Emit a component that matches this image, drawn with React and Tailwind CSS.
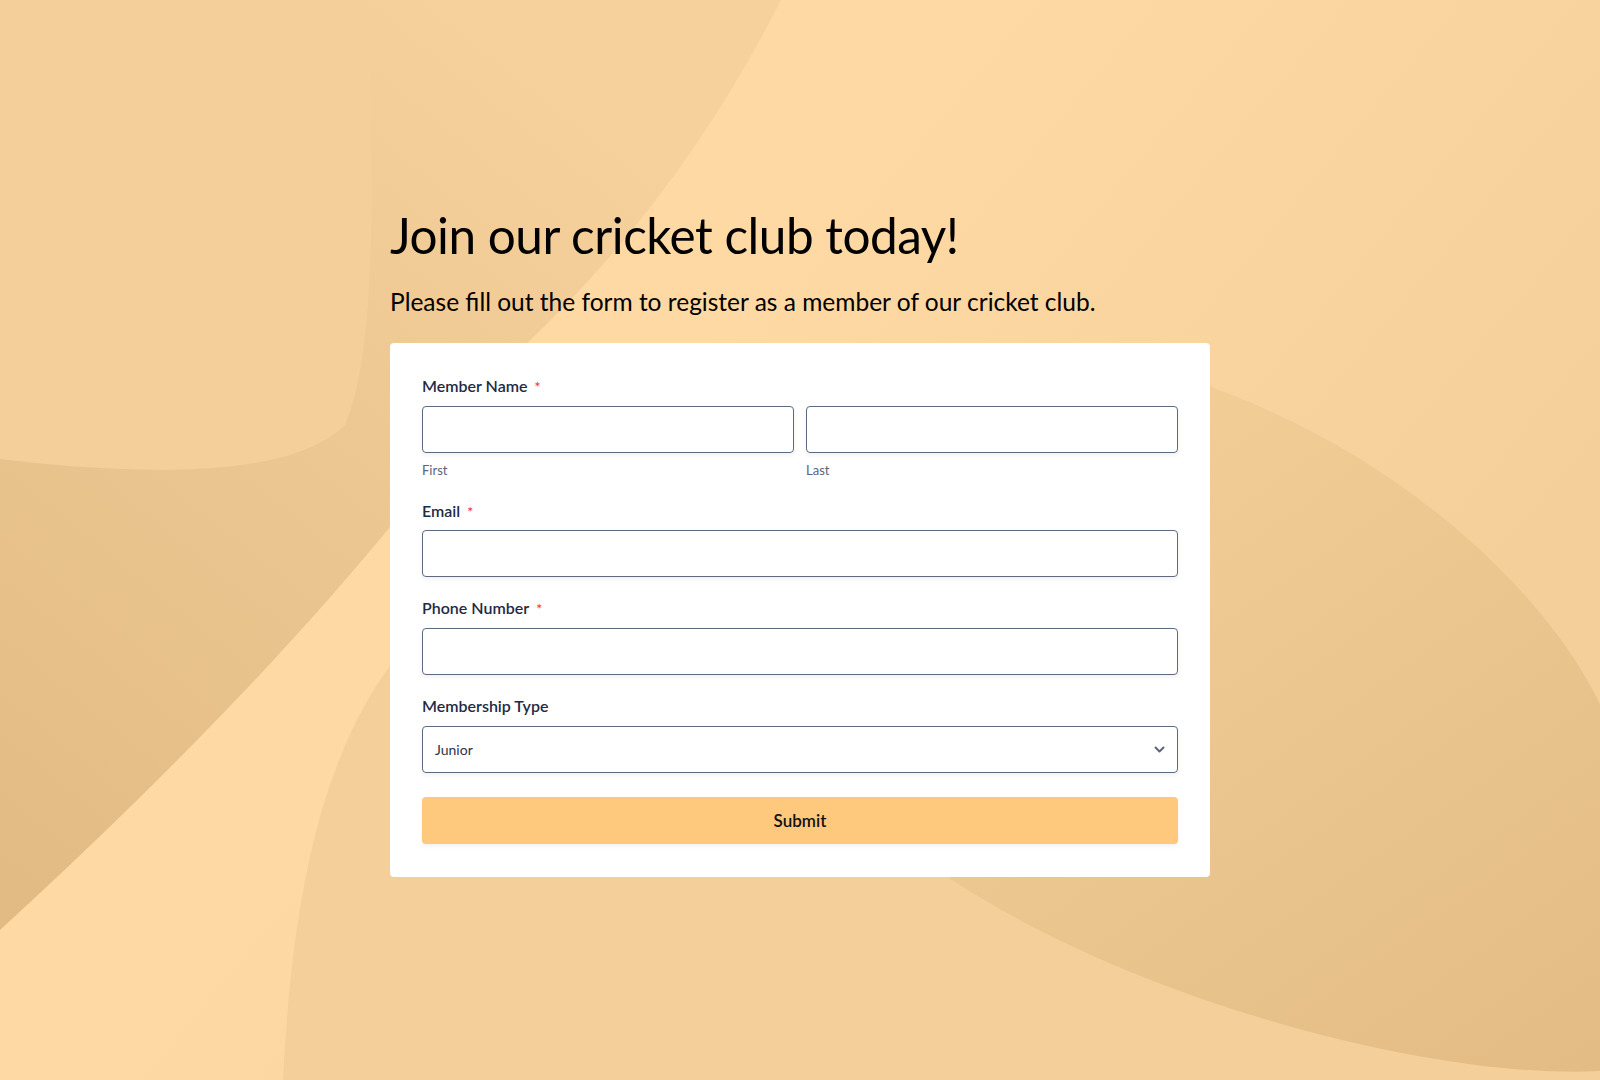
import React from 'react';

function Backdrop(){
  return (
    <svg className="absolute inset-0 w-full h-full" viewBox="0 0 1600 1080" preserveAspectRatio="none">
      <defs>
        <linearGradient id="bg" gradientUnits="userSpaceOnUse" x1="1000" y1="0" x2="1600" y2="500">
          <stop offset="0" stopColor="#fed9a3" />
          <stop offset="1" stopColor="#f5cf99" />
        </linearGradient>
        <linearGradient id="ga" gradientUnits="userSpaceOnUse" x1="650" y1="150" x2="40" y2="900">
          <stop offset="0" stopColor="#f6d19c" />
          <stop offset="1" stopColor="#e2bb84" />
        </linearGradient>
        <linearGradient id="gd" gradientUnits="userSpaceOnUse" x1="1150" y1="420" x2="1600" y2="1060">
          <stop offset="0" stopColor="#f2cd96" />
          <stop offset="1" stopColor="#e3bc85" />
        </linearGradient>
      </defs>
      <rect x="0" y="0" width="1600" height="1080" fill="url(#bg)" />
      <path d="M0 0 L781 0 Q680 200 520 350 Q360 600 0 930 Z" fill="url(#ga)" />
      <path d="M0 0 L367 0 C376 200 374 360 345 425 C300 470 190 472 122 469 C70 467 25 462 0 459 Z" fill="#f4cf9a" />
      <path d="M283 1080 C292 900 320 760 392 663 L560 360 L1205 360 L1205 380 L1600 720 L1600 1080 Z" fill="#f4cf9a" />
      <path d="M1184 378 C1380 440 1540 580 1600 704 L1600 1071 C1450 1080 1150 1010 949 878 L980 860 Z" fill="url(#gd)" />
    </svg>
  );
}

function Label({ text, required }){
  return (
    <label className="block text-[16px] leading-5 font-semibold text-[#1f2a44]">
      {text}
      {required && <span className="ml-[7px] text-[14px] text-[#f23a3c]">*</span>}
    </label>
  );
}

function Field({ label, required, gap = 'mt-[10px]', children }){
  return (
    <div>
      <Label text={label} required={required} />
      <div className={gap}>{children}</div>
    </div>
  );
}

const inputCls = "block w-full h-[47px] rounded-[4px] border border-[#5f6a7d] bg-white shadow-[0_2px_4px_rgba(40,40,60,0.07)] outline-none";

export default function App(){
  return (
    <div className="relative w-full h-screen overflow-hidden bg-[#fed9a3]" style={{ fontFamily: 'Lato, "Noto Sans", sans-serif' }}>
      <Backdrop />
      <div className="relative w-[820px] mx-auto pt-[206px]">
        <h1 className="text-[49.5px] leading-[58px] font-normal text-black tracking-[-0.01em]">Join our cricket club today!</h1>
        <p className="mt-[23px] text-[24.5px] leading-[30px] text-black">Please fill out the form to register as a member of our cricket club.</p>
        <div className="mt-[26px] bg-white rounded-[4px] px-8 pt-[33px] pb-[33px] flex flex-col">
          <Field label="Member Name" required gap="mt-[9px]">
            <div className="grid grid-cols-2 gap-3">
              <div>
                <input className={inputCls} />
                <div className="mt-[9px] text-[13px] leading-4 text-[#5b6478]">First</div>
              </div>
              <div>
                <input className={inputCls} />
                <div className="mt-[9px] text-[13px] leading-4 text-[#5b6478]">Last</div>
              </div>
            </div>
          </Field>
          <div className="mt-[23px]">
            <Field label="Email" required gap="mt-[8px]">
              <input className={inputCls} />
            </Field>
          </div>
          <div className="mt-[21px]">
            <Field label="Phone Number" required gap="mt-[9px]">
              <input className={inputCls} />
            </Field>
          </div>
          <div className="mt-[21px]">
            <Field label="Membership Type">
              <div className="relative">
                <div className={inputCls + " flex items-center px-[12px] text-[14px] text-[#2c3345]"}>Junior</div>
                <svg className="absolute right-[13px] top-[20px]" width="11" height="8" viewBox="0 0 11 8">
                  <polyline points="1.5,1.5 5.5,5.5 9.5,1.5" fill="none" stroke="#5f6677" strokeWidth="2" strokeLinecap="round" strokeLinejoin="round" />
                </svg>
              </div>
            </Field>
          </div>
          <button className="mt-6 h-[47px] w-full rounded-[4px] bg-[#fec87d] text-[17px] font-semibold text-[#111] shadow-[0_2px_4px_rgba(40,40,60,0.06)]">Submit</button>
        </div>
      </div>
    </div>
  );
}
